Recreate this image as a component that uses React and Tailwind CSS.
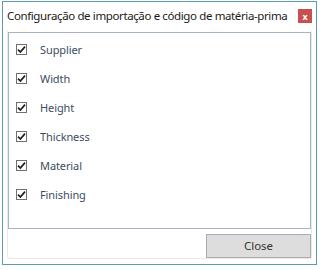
import React from "react";

function Check() {
  return (
    <span className="w-[11px] h-[11px] border border-[#6f6f6f] bg-white flex items-center justify-center shrink-0">
      <svg width="9" height="9" viewBox="0 0 9 9">
        <path d="M1 4.6 L3.4 7 L8 1.6" fill="none" stroke="#1f1f1f" strokeWidth="1.7" />
      </svg>
    </span>
  );
}

const items = ["Supplier", "Width", "Height", "Thickness", "Material", "Finishing"];

export default function App() {
  return (
    <div className="w-[320px] h-[270px] bg-white pt-[1px] pl-[2px]" style={{ fontFamily: '"Noto Sans", "Open Sans", sans-serif' }}>
      <div className="w-[315px] h-[264px] border border-[#5a9cb3] bg-white flex flex-col">
        <div className="h-[29px] flex items-start justify-between pl-[4px] pr-[4px] shrink-0">
          <span className="mt-[8px] text-[11.5px] text-[#1a1a1a] leading-none tracking-[-0.38px] whitespace-nowrap">Configuração de importação e código de matéria-prima</span>
          <span className="mt-[7px] w-[14px] h-[14px] bg-[#c75050] flex items-center justify-center text-white text-[9px] font-bold leading-none">x</span>
        </div>
        <div className="mx-[4px] h-[228px] border-x border-b border-[#e8e8e8] rounded-b-[3px] flex flex-col">
          <div className="h-[197px] mt-[1px] border border-[#a9b4c2] pt-[2px] pl-[7px] flex flex-col">
            {items.map((t) => (
              <div key={t} className="h-[29px] flex items-center gap-[13px]">
                <Check />
                <span className="text-[11px] text-[#3e4d62] leading-none tracking-[-0.1px]">{t}</span>
              </div>
            ))}
          </div>
          <div className="flex justify-end mt-[5px]">
            <button className="w-[105px] h-[24px] bg-[#dddddd] border border-[#acacac] text-[11.5px] text-[#333] leading-none">Close</button>
          </div>
        </div>
      </div>
    </div>
  );
}
